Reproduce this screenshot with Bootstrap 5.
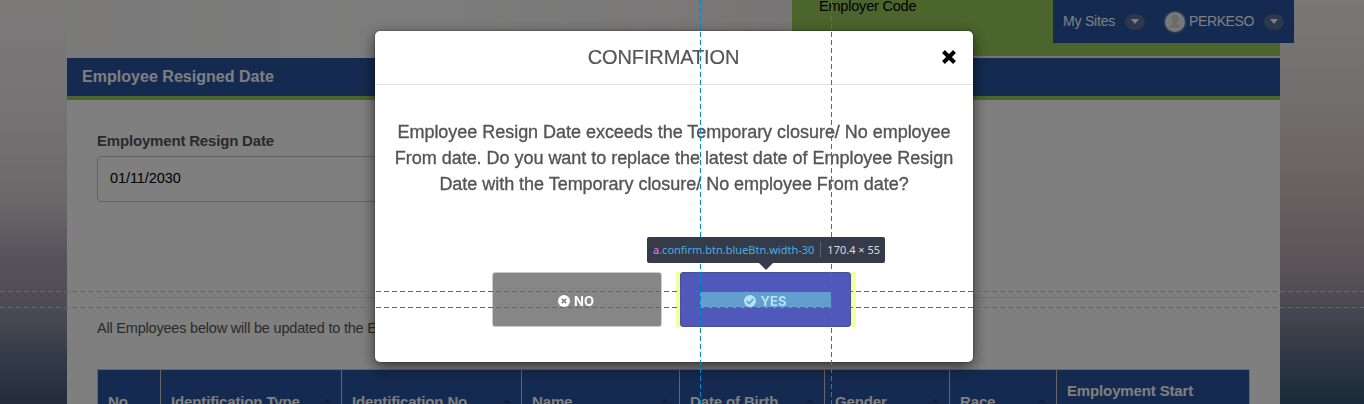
<!DOCTYPE html>
<html lang="en">
<head>
<meta charset="utf-8">
<meta name="viewport" content="width=device-width, initial-scale=1">
<title>Employee Resigned Date</title>
<link href="https://cdn.jsdelivr.net/npm/bootstrap@5.3.0/dist/css/bootstrap.min.css" rel="stylesheet">
<style>
html, body { height: 404px; overflow: hidden; }
body {
  font-family: "Liberation Sans", Arial, sans-serif; font-size: 14.5px; letter-spacing: -.2px; color: #555;
  background:
    linear-gradient(#f4eeed 0, #e6dcdc 100px, #d8cccd 160px, #b9abb1 260px, #9e98a6 295px, #747d94 335px, #345470 404px) right top / 84px 404px no-repeat,
    linear-gradient(#f7f5f4 0, #ebe7e8 110px, #d8d1d4 200px, #aca5b5 260px, #a49daf 290px, #8a8c9f 325px, #687890 355px, #445a72 404px) left top / 67px 404px no-repeat,
    linear-gradient(90deg, #f5f3f2, #f9f9f9 30%, #efe9e8 65%, #ede4e7);
}
.page { width: 1213px; margin-left: 67px; height: 404px; overflow: hidden; }
.code-panel { width: 488px; height: 56px; background: #96ca58; color: #000; padding-left: 27px; line-height: 13px; }
.user-bar { left: 1053px; top: 0; width: 241px; height: 43px; background: #2854a0; color: #fff; font-size: 14px; padding-left: 10px; }
.caret-pill { width: 20px; height: 16px; border-radius: 50%; background: #58719d; }
.avatar { width: 24px; height: 24px; }
.panel-title { height: 42px; background: #2854a0; border-bottom: 4px solid #96ca58; color: #fff; font: bold 16px "Liberation Sans", Arial, sans-serif; letter-spacing: .03px; padding-left: 15px; }
.panel-body { background: #fff; padding: 30px 30px 0; height: 330px; }
.field-label { font-size: 15px; line-height: 22px; letter-spacing: -.18px; font-weight: bold; }
.date-box { width: 540px; height: 46px; margin-top: 4px; border: 1px solid #c4c4c4; border-radius: 4px; padding: 0 12px; font-size: 14.5px; letter-spacing: -.08px; color: #000; }
.rule { height: 1px; background: #e4e4e4; margin-top: 95px; }
.note { margin-top: 19px; line-height: 22px; }
.emp-table { width: 1153px; margin-top: 30px; table-layout: fixed; border-collapse: collapse; font-size: 15px; letter-spacing: -.14px; line-height: 22px; color: #fff; }
.emp-table th { background: #2854a0; border: 1px solid #ccc; padding: 10px; vertical-align: middle; height: 63px; position: relative; }
.emp-table th.sortable::after { content: ""; position: absolute; right: 10px; top: 29px; border: 4px solid transparent; border-top: 0; border-bottom-color: #1f3f7a; }
.modal-backdrop.show { opacity: .5; }
.modal { overflow: hidden; font-size: 18px; letter-spacing: 0; }
.confirm-dialog { width: 598px; max-width: none; margin: 31px 0 0 375px; }
.confirm-dialog .modal-content { height: 331px; border: 0; border-radius: 5px; box-shadow: 0 5px 15px rgba(0,0,0,.6), 0 0 2px rgba(0,0,0,.5); color: #555; }
.confirm-head { height: 54px; border-bottom: 1px solid #e2e2e2; }
.confirm-head h4 { font-size: 20px; line-height: 24px; margin: 0; font-weight: 400; letter-spacing: -.1px; padding: 0 21px 2px 0; -webkit-text-stroke: .2px #555; }
.close-x { right: 16px; top: 19px; line-height: 0; }
.confirm-text { line-height: 26px; padding: 34px 10px 0; -webkit-text-stroke: .35px #555; letter-spacing: -.03px; }
.answer { width: 170px; height: 55px; border-radius: 3px; border: 1px solid #ccc; background: #868686; color: #fff; font: bold 13px Inter, sans-serif; padding: 3px 2px 0 0; letter-spacing: .1px; }
.answer:hover { background: #868686; color: #fff; }
.answer.yes { width: 171px; background: #5058ba; border-color: #44509c; color: #b5e3f5; }
.margin-box { background: #f3ffa0; padding: 0 5px 0 4px; margin-left: 14px; }
.content-box { width: 131px; height: 16px; background: #629fcf; padding-top: 2px; }
.answers { margin-top: 75px; padding-left: 117px; }
.guide { z-index: 2000; pointer-events: none; }
.guide-h { left: 0; width: 1364px; height: 1px; background: repeating-linear-gradient(90deg, #0087cc 0 5px, transparent 5px 8px); }
.guide-v { top: 0; width: 1px; height: 404px; background: repeating-linear-gradient(#0087cc 0 5px, transparent 5px 8px); }
.inspect-tip { z-index: 2001; left: 647px; top: 237px; width: 238px; height: 26px; border-radius: 2px; background: #353b48; color: #d7dce2; font: 11px "Noto Sans", sans-serif; padding: 0 6px 2px; letter-spacing: 0; }
.inspect-tip::after { content: ""; position: absolute; left: 112px; top: 26px; border: 7px solid transparent; border-bottom: 0; border-top-color: #353b48; }
.tip-tag { color: #df80ff; } .tip-cls { color: #46afe3; }
.tip-size { border-left: 1px solid #5a6375; padding-left: 6px; margin-left: 6px; line-height: 15px; }
</style>
</head>
<body>
<div class="page">
  <div class="code-panel ms-auto">Employer Code</div>
  <div class="user-bar position-absolute d-flex align-items-center">
    <span>My Sites</span>
    <span class="caret-pill d-inline-flex align-items-center justify-content-center" style="margin-left:10px"><svg width="8" height="5"><path d="M0 0h8L4 5z" fill="#fff"/></svg></span>
    <svg class="avatar" style="margin-left:18px" viewBox="0 0 24 24"><circle cx="12" cy="12" r="10.8" fill="#f0f0f0" stroke="#4478b8" stroke-width="1.6"/><path d="M12 5c5 0 4 6 1.8 8 0 2 3 1 3.200 4.500H7C7 14 10 15 10.200 13 8 11 7 5 12 5z" fill="#d5d5d5"/></svg>
    <span style="margin-left:2px;letter-spacing:-.4px">PERKESO</span>
    <span class="caret-pill d-inline-flex align-items-center justify-content-center" style="margin-left:10px"><svg width="8" height="5"><path d="M0 0h8L4 5z" fill="#fff"/></svg></span>
  </div>
  <div class="panel-title d-flex align-items-center" style="margin-top:2px">Employee Resigned Date</div>
  <div class="panel-body">
    <div class="field-label">Employment Resign Date</div>
    <div class="date-box d-flex align-items-center">01/11/2030</div>
    <div class="rule"></div>
    <div class="note">All Employees below will be updated to the Employment Resign Date</div>
    <table class="emp-table">
      <colgroup><col style="width:63px"><col style="width:181px"><col style="width:180px"><col style="width:158px"><col style="width:145px"><col style="width:125px"><col style="width:107px"><col style="width:193px"></colgroup>
      <thead><tr><th>No</th><th class="sortable">Identification Type</th><th class="sortable">Identification No</th><th class="sortable">Name</th><th class="sortable">Date of Birth</th><th class="sortable">Gender</th><th class="sortable">Race</th><th>Employment Start<br>&nbsp;</th></tr></thead>
    </table>
  </div>
</div>

<div class="modal-backdrop show"></div>
<div class="modal show d-block" tabindex="-1">
  <div class="modal-dialog confirm-dialog">
    <div class="modal-content">
      <div class="confirm-head position-relative d-flex align-items-center justify-content-center">
        <h4>CONFIRMATION</h4>
        <span class="close-x position-absolute"><svg width="16" height="14" viewBox="0 0 16 14"><path d="M2.500 1.500l11 11M13.500 1.500l-11 11" stroke="#000" stroke-width="4"/></svg></span>
      </div>
      <div class="confirm-text text-center">Employee Resign Date exceeds the Temporary closure/ No employee<br>From date. Do you want to replace the latest date of Employee Resign<br>Date with the Temporary closure/ No employee From date?</div>
      <div class="answers d-flex">
        <a class="btn answer d-flex align-items-center justify-content-center gap-1"><svg width="12" height="12" viewBox="0 0 12 12"><circle cx="6" cy="6" r="6" fill="#fff"/><path d="M3.800 3.800l4.400 4.400M8.200 3.800L3.800 8.200" stroke="#868686" stroke-width="1.700"/></svg>NO</a>
        <div class="margin-box">
          <a class="btn answer yes d-flex align-items-center justify-content-center p-0"><span class="content-box d-flex align-items-center justify-content-center gap-1"><svg width="12" height="12" viewBox="0 0 12 12"><circle cx="6" cy="6" r="6" fill="#b5e3f5"/><path d="M2.800 6.200l2.300 2.300 4.200-4.300" fill="none" stroke="#629fcf" stroke-width="1.700"/></svg>YES</span></a>
        </div>
      </div>
    </div>
  </div>
</div>

<div class="guide guide-h position-fixed" style="top:291px"></div>
<div class="guide guide-h position-fixed" style="top:307px"></div>
<div class="guide guide-v position-fixed" style="left:700px"></div>
<div class="guide guide-v position-fixed" style="left:831px"></div>
<div class="inspect-tip position-fixed d-flex align-items-center text-nowrap"><span class="tip-tag">a</span><span class="tip-cls">.confirm.btn.blueBtn.width-30</span><span class="tip-size">170.4 × 55</span></div>
<script src="https://cdn.jsdelivr.net/npm/bootstrap@5.3.0/dist/js/bootstrap.bundle.min.js"></script>
</body>
</html>
